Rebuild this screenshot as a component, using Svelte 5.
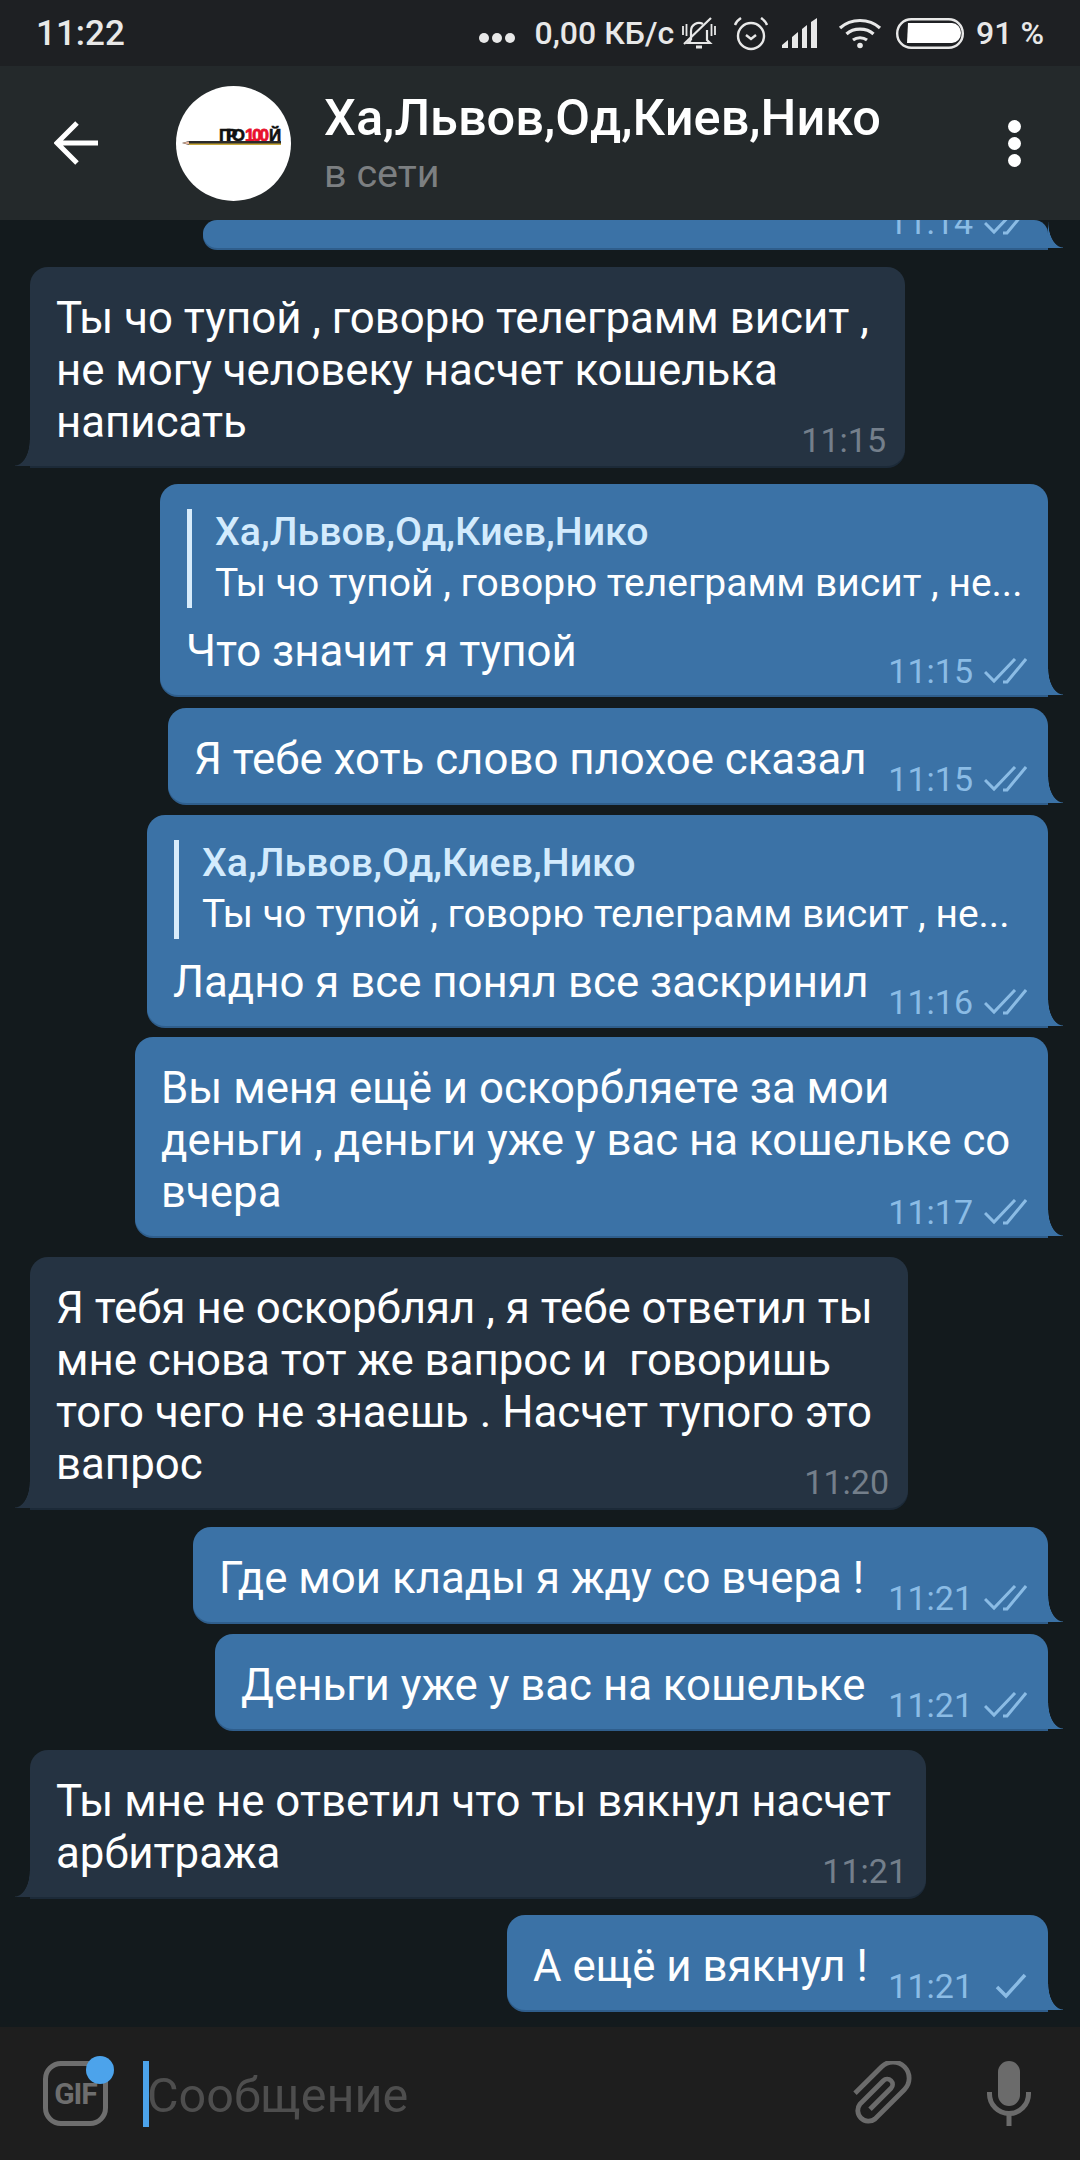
<script>
	const reply = {
		name: 'Ха,Львов,Од,Киев,Нико',
		text: 'Ты чо тупой , говорю телеграмм висит , не...'
	};

	const messages = [
		{ out: true, width: 845, stub: true, time: '11:14', ticks: 2 },
		{ out: false, width: 875, time: '11:15', gap: 19, lines: ['Ты чо тупой , говорю телеграмм висит ,', 'не могу человеку насчет кошелька', 'написать'] },
		{ out: true, width: 888, time: '11:15', ticks: 2, gap: 18, reply, lines: ['Что значит я тупой'] },
		{ out: true, width: 880, time: '11:15', ticks: 2, gap: 13, lines: ['Я тебе хоть слово плохое сказал'] },
		{ out: true, width: 901, time: '11:16', ticks: 2, gap: 12, reply, lines: ['Ладно я все понял все заскринил'] },
		{ out: true, width: 913, time: '11:17', ticks: 2, gap: 11, lines: ['Вы меня ещё и оскорбляете за мои', 'деньги , деньги уже у вас на кошельке со', 'вчера'] },
		{ out: false, width: 878, time: '11:20', gap: 21, lines: ['Я тебя не оскорблял , я тебе ответил ты', 'мне снова тот же вапрос и  говоришь', 'того чего не знаешь . Насчет тупого это', 'вапрос'] },
		{ out: true, width: 855, time: '11:21', ticks: 2, gap: 19, lines: ['Где мои клады я жду со вчера !'] },
		{ out: true, width: 833, time: '11:21', ticks: 2, gap: 12, lines: ['Деньги уже у вас на кошельке'] },
		{ out: false, width: 896, time: '11:21', gap: 21, lines: ['Ты мне не ответил что ты вякнул насчет', 'арбитража'] },
		{ out: true, width: 541, time: '11:21', ticks: 1, gap: 18, lines: ['А ещё и вякнул !'] }
	];
</script>

<div class="screen">
	<div class="status">
		<span class="clock">11:22</span>
		<div class="status-right">
			<span class="more"><i></i><i></i><i></i></span>
			<span class="speed">0,00 КБ/с</span>
			<svg class="bell" width="34" height="34" viewBox="0 0 34 34" fill="none" stroke="#e8e8e8" stroke-width="2.2">
				<path d="M9 24V15a8 8 0 0 1 12-7M25 14v10l3 3H6l3-3" />
				<path d="M14 31h6" stroke-width="3" />
				<path d="M2 28 29 2" />
				<path d="M1 10v9M4.500 8v12M33 10v9M29.500 8v12" stroke-width="1.800" />
			</svg>
			<svg class="alarm" width="36" height="35" viewBox="0 0 36 35" fill="none" stroke="#e8e8e8" stroke-width="2.4">
				<circle cx="18" cy="20" r="13" />
				<path d="m13 19 5 4 5-4" />
				<path d="M2 9c1-3 3-5 6-7M34 9c-1-3-3-5-6-7" />
			</svg>
			<svg class="signal" width="40" height="30" viewBox="0 0 40 30" fill="#e8e8e8">
				<path d="M0 30v-3l6-5v8zM10 30V19l6-5v16zM20 30V11l5-4v23zM29 30V4l6-4v30z" />
			</svg>
			<svg class="wifi" width="44" height="31" viewBox="0 0 44 31" fill="none" stroke="#e8e8e8" stroke-width="3.200">
				<path d="M2 10c11-10 29-10 40 0M8.500 16c7-6.500 20-6.500 27 0M15 22c4-3 10-3 14 0" />
				<circle cx="22" cy="27.500" r="2.800" fill="#e8e8e8" stroke="none" />
			</svg>
			<svg class="battery" width="68" height="31" viewBox="0 0 68 31">
				<rect x="1.200" y="1.200" width="65.600" height="28.600" rx="14" fill="none" stroke="#e8e8e8" stroke-width="2.400" />
				<path d="M12 5h44a9 10 0 0 1 9 10v0a9 10 0 0 1-9 10H11z" fill="#fff" />
			</svg>
			<span class="battery-pct">91 %</span>
		</div>
	</div>

	<header class="topbar">
		<svg class="back" width="44" height="44" viewBox="0 0 44 44" fill="none" stroke="#fff" stroke-width="5">
			<path d="M44 22H4M23 2 3 22l20 20" />
		</svg>
		<div class="avatar">
			<svg width="115" height="115" viewBox="0 0 115 115">
				<text x="43" y="55" font-size="17" font-weight="700" fill="#111" stroke="#111" stroke-width=".6" textLength="26">ПРО</text>
				<text x="69" y="55" font-size="17" font-weight="700" fill="#e8112d" stroke="#e8112d" stroke-width=".8" textLength="24">100</text>
				<text x="93" y="55" font-size="17" font-weight="700" fill="#111" stroke="#111" stroke-width=".6" textLength="10">Й</text>
				<path d="M6 57 13 55h92v4H13z" fill="#2b2b2b" />
				<path d="M13 57.500h92V59H13z" fill="#c9a93a" />
				<path d="M6 57l7-1.500v3z" fill="#e8b9a0" />
			</svg>
		</div>
		<div class="title">
			<div class="name">Ха,Львов,Од,Киев,Нико</div>
			<div class="presence">в сети</div>
		</div>
		<span class="menu"><i></i><i></i><i></i></span>
	</header>

	<main class="list">
		{#each messages as m}
			<div class="row" class:out={m.out} style="margin-top: {m.gap ?? 0}px">
				<div class="bubble" class:stub={m.stub} style="width: {m.width}px">
					{#if m.reply}
						<div class="reply">
							<div class="reply-name">{m.reply.name}</div>
							<div class="reply-text">{m.reply.text}</div>
						</div>
					{/if}
					{#if m.lines}
						{#each m.lines as line}
							<div class="line">{line}</div>
						{/each}
					{/if}
					<div class="meta">
						<span>{m.time}</span>
						{#if m.ticks === 2}
							<svg width="43" height="26" viewBox="0 0 43 26" fill="none" stroke="currentColor" stroke-width="3">
								<path d="M1 14 10 23 31 1" />
								<path d="M19 24H23L42 1" />
							</svg>
						{:else if m.ticks === 1}
							<svg width="43" height="26" viewBox="0 0 43 26" fill="none" stroke="currentColor" stroke-width="3.500">
								<path d="M13 14 22 23 41 2" />
							</svg>
						{/if}
					</div>
				</div>
			</div>
		{/each}
	</main>

	<footer class="composer">
		<div class="gif">
			<span>GIF</span>
			<i class="dot"></i>
		</div>
		<div class="caret"></div>
		<div class="placeholder">Сообщение</div>
		<svg class="clip" width="60" height="66" viewBox="0 0 60 66" fill="none" stroke="#6b6b6b" stroke-width="4.800">
			<path d="M3 32.300 29.700 5.700A16 16 0 0 1 52.300 28.700L23 58A10.700 10.700 0 0 1 8 43L31.300 19.700A5.400 5.400 0 0 1 39 27.300L18 48.300" />
		</svg>
		<svg class="mic" width="44" height="66" viewBox="0 0 44 66">
			<rect x="11" y="0" width="22" height="45" rx="11" fill="#6b6b6b" />
			<path d="M2.500 31v2a19.500 19.500 0 0 0 39 0v-2" fill="none" stroke="#6b6b6b" stroke-width="5" />
			<path d="M22 52v13" stroke="#6b6b6b" stroke-width="5" />
		</svg>
	</footer>
</div>

<style>
	:global(body) {
		margin: 0;
		background: #131a1d;
	}
	.screen {
		width: 1080px;
		height: 2160px;
		display: flex;
		flex-direction: column;
		overflow: hidden;
		background: #131a1d;
		font-family: Roboto, 'Noto Sans', sans-serif;
		color: #fff;
	}
	.status {
		height: 66px;
		flex: none;
		display: flex;
		justify-content: space-between;
		align-items: center;
		padding: 0 36px;
		background: #1e2023;
		color: #e8e8e8;
		font-weight: 500;
		font-size: 32px;
	}
	.clock {
		font-size: 35px;
	}
	.status-right {
		display: flex;
		align-items: center;
	}
	.more {
		display: flex;
		gap: 3px;
		margin-right: 20px;
		padding-top: 10px;
	}
	.more i {
		width: 10px;
		height: 10px;
		border-radius: 50%;
		background: #e8e8e8;
	}
	.speed {
		margin-right: 8px;
	}
	.alarm {
		margin-left: 17px;
	}
	.signal {
		margin-left: 13px;
	}
	.wifi {
		margin-left: 16px;
	}
	.battery {
		margin-left: 14px;
	}
	.battery-pct {
		margin-left: 12px;
	}
	.topbar {
		height: 154px;
		flex: none;
		display: flex;
		align-items: center;
		padding: 0 59px 0 54px;
		background: #24292b;
		position: relative;
	}
	.avatar {
		width: 115px;
		height: 115px;
		margin-left: 78px;
		border-radius: 50%;
		background: #fff;
		flex: none;
	}
	.avatar text {
		font-family: 'Liberation Sans', sans-serif;
	}
	.title {
		margin-left: 33px;
		flex: 1;
	}
	.name {
		font-size: 50.500px;
		font-weight: 500;
		line-height: 52px;
	}
	.presence {
		font-size: 39.500px;
		color: #7c7f81;
		line-height: 42px;
		margin-top: 9px;
	}
	.menu {
		display: flex;
		flex-direction: column;
		gap: 4px;
	}
	.menu i {
		width: 13px;
		height: 13px;
		border-radius: 50%;
		background: #fff;
	}
	.list {
		flex: 1;
		min-height: 0;
		overflow: hidden;
	}
	.row {
		display: flex;
		padding: 0 32px 0 30px;
	}
	.row.out {
		justify-content: flex-end;
	}
	.bubble {
		position: relative;
		box-sizing: border-box;
		padding: 25px 20px 18px 26px;
		border-radius: 18px 18px 18px 0;
		background: #253342;
		box-shadow: 0 2px 0 #1c2a38;
		font-size: 43.800px;
		line-height: 52px;
	}
	.out .bubble {
		border-radius: 18px 18px 0 18px;
		background: #3b72a6;
		box-shadow: 0 2px 0 #2f5e8c;
	}
	.bubble::after {
		content: '';
		position: absolute;
		bottom: 0;
		left: -15px;
		width: 15px;
		height: 26px;
		background: radial-gradient(ellipse 15px 26px at 0 0, transparent 96%, #253342 100%);
	}
	.out .bubble::after {
		left: auto;
		right: -15px;
		background: radial-gradient(ellipse 15px 26px at 100% 0, transparent 96%, #3b72a6 100%);
	}
	.stub {
		height: 28px;
		padding: 0;
	}
	.line {
		white-space: pre;
	}
	.reply {
		margin-left: 1px;
		border-left: 5px solid #d8ecfb;
		padding-left: 23px;
		margin-bottom: 17px;
	}
	.reply-name {
		font-size: 39.300px;
		font-weight: 500;
		color: #d3ebfd;
		line-height: 46px;
	}
	.reply-text {
		font-size: 39px;
		line-height: 49px;
		margin-top: 4px;
		white-space: nowrap;
	}
	.meta {
		position: absolute;
		right: 19px;
		bottom: 5px;
		display: flex;
		align-items: flex-end;
		gap: 11px;
		color: #747f8b;
		font-size: 34px;
		line-height: 42px;
	}
	.meta svg {
		margin-bottom: 8px;
	}
	.out .meta {
		right: 21px;
		bottom: 3px;
		color: #8bbce5;
	}
	.out .stub .meta {
		bottom: 5px;
	}
	.composer {
		height: 133px;
		flex: none;
		display: flex;
		align-items: center;
		padding: 0 49px 0 43px;
		background: #1e1e1e;
	}
	.gif {
		position: relative;
		box-sizing: border-box;
		width: 65px;
		height: 65px;
		border: 5px solid #6e6e6e;
		border-radius: 18px;
		display: flex;
		align-items: center;
		justify-content: center;
		color: #6e6e6e;
		font-size: 30px;
		font-weight: 700;
		letter-spacing: -1px;
		flex: none;
	}
	.dot {
		position: absolute;
		top: -10px;
		right: -11px;
		width: 28px;
		height: 28px;
		border-radius: 50%;
		background: #4ca3eb;
	}
	.caret {
		width: 6px;
		height: 66px;
		margin-left: 35px;
		background: #4ca3eb;
		flex: none;
	}
	.placeholder {
		flex: 1;
		margin-left: -2px;
		padding-top: 3px;
		font-size: 48.500px;
		color: #4e4e4e;
	}
	.mic {
		margin-left: 75px;
	}
</style>
